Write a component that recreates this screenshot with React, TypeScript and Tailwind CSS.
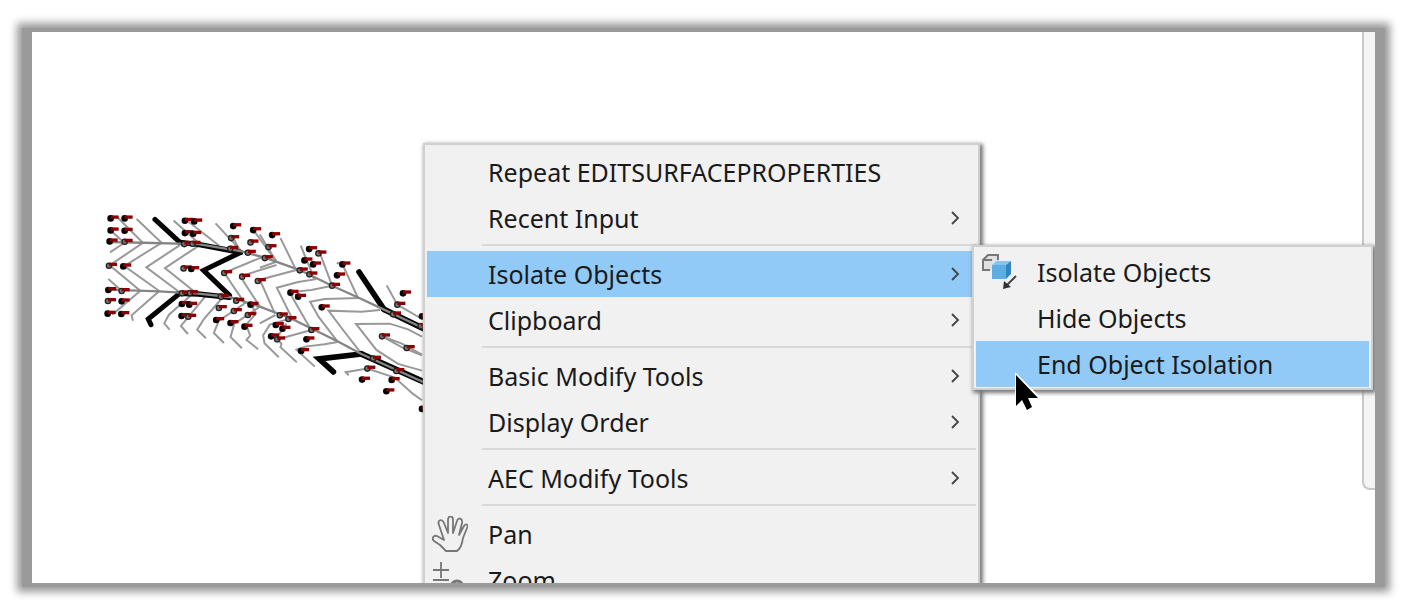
import type { ReactNode } from "react";
import { clsx } from "clsx";

type MenuEntry = {
  label: string;
  submenu?: boolean;
  active?: boolean;
  icon?: ReactNode;
};

// x, y of each survey point; hollow ones sit on a breakline
type Point = [number, number, boolean?];

const POINTS: Point[] = [
  [47, 55], [89, 55], [47, 91], [89, 92], [44, 124], [89, 125, true],
  [42, 197, true], [85, 199], [40, 270], [80, 273, true], [39, 303, true], [80, 304],
  [38, 341], [79, 342], [270, 62], [298, 64], [270, 99], [295, 101],
  [268, 132, true], [293, 131, true], [266, 205, true], [289, 207],
  [261, 280, true], [285, 279, true], [261, 312], [283, 314], [260, 348], [280, 350, true],
  [415, 78], [475, 90], [409, 114, true], [467, 127, true], [406, 146, true], [459, 158, true],
  [388, 219, true], [442, 230, true], [489, 243, true], [378, 290, true], [424, 302, true],
  [372, 324, true], [417, 333, true], [364, 360], [407, 369], [459, 345, true], [449, 380], [467, 314],
  [532, 105], [521, 141, true], [510, 174, true], [643, 147], [671, 160, true],
  [629, 181], [655, 193], [615, 211, true], [644, 223, true], [743, 193], [727, 226],
  [712, 257, true], [587, 278], [610, 290], [681, 322], [555, 346, true], [581, 357, true],
  [543, 375], [563, 386], [529, 409], [547, 418, true], [650, 390, true], [635, 418], [619, 453],
  [925, 280], [908, 314, true], [895, 343, true], [978, 378, true], [982, 349],
  [862, 409, true], [936, 444, true], [835, 476, true], [818, 506, true], [802, 539],
  [905, 513, true], [891, 540], [875, 574], [982, 627],
];

const CONTOURS = [
  "M68 52 L144 128 L44 196 L136 272 L52 344",
  "M45 90 L88 128 L45 157",
  "M125 57 L200 128 L88 198 L193 273 L110 346 L114 362",
  "M40 237 L80 272",
  "M236 61 L310 128 M255 130 M310 138 L210 204 L300 276",
  "M255 135 L154 202 L248 272",
  "M280 64 L373 137",
  "M362 70 L437 150",
  "M295 280 L222 344 L208 370 L224 389",
  "M332 288 L258 378 L279 402",
  "M382 294 L327 357 L307 389 L333 415",
  "M415 114 L435 151 M476 90 L545 185 M510 168 L388 218 L450 310 L372 362 L357 399 L387 429",
  "M545 195 L436 229 L495 320 L418 372 L407 411 L441 445",
  "M467 310 L484 340 L454 374 L466 407 L455 420 L490 448",
  "M495 103 L545 185 L495 203 M557 114 L604 210 L495 239 L540 340",
  "M618 137 L650 215 M676 161 L712 257",
  "M648 224 L660 238 L610 246 L546 263 L592 355",
  "M712 257 L650 270 L584 277 L647 386",
  "M726 188 L743 193 L790 294 L690 297 L646 305 L671 350 L728 424",
  "M856 330 L800 335 L701 332 L745 390 L800 461",
  "M982 410 L940 388 L885 371 L784 372 L845 450 L910 492 L982 512",
  "M876 256 L908 314 L982 357",
  "M982 464 L920 430 L862 409 L925 444 L982 466",
  "M542 345 L495 370 M575 359 L525 374 L505 406 L509 430 L552 472",
  "M575 371 L546 413 L560 432 L557 442 L606 487",
  "M650 390 L549 418 M728 426 L690 433 L631 440 L605 449 L660 500",
  "M762 526 L753 517 L818 506 L900 533 L955 582 L982 601",
];

function SurfacePlot() {
  return (
    <svg viewBox="0 0 985 660" className="absolute left-[63px] top-[168px] h-[220px] w-[328px]" aria-hidden="true">
      <g fill="none" stroke="#999" strokeWidth="6">
        {CONTOURS.map((d) => (
          <path key={d} d={d} />
        ))}
      </g>
      <g fill="none" stroke="#050505" strokeLinecap="round" strokeLinejoin="miter">
        <path strokeWidth="15" d="M180 58 L255 127 M437 157 L326 211 L404 286 M250 284 L160 357 L168 374" />
        <path strokeWidth="16" d="M255 127 L310 133 L437 157 M250 280 L310 282 L404 292" />
        <path strokeWidth="17" d="M793 216 L868 328 M800 462 L673 477 L716 516" />
        <path strokeWidth="18" d="M868 328 L985 385 M800 462 L985 545" />
      </g>
      <g fill="none" stroke="#858585" strokeWidth="7">
        <path d="M44 126 L144 128 L310 132 L437 153 L510 173 L615 210 L712 257 L800 297 L868 329 L985 384" />
        <path d="M40 269 L193 274 L310 281 L404 291 L495 320 L592 357 L728 424 L800 462 L985 546" />
      </g>
      {POINTS.map(([x, y, hollow]) => (
        <g key={`${x}-${y}`}>
          <circle
            cx={x}
            cy={y}
            r={hollow ? 8 : 10}
            fill={hollow ? "#777" : "#050505"}
            stroke={hollow ? "#222" : "none"}
            strokeWidth="4"
          />
          <path d={`M${x} ${y - 4} h24`} stroke="#8b0000" strokeWidth="10" />
        </g>
      ))}
    </svg>
  );
}

function HandIcon() {
  return (
    <svg viewBox="0 0 36 36" className="size-9" fill="none" stroke="#777" strokeWidth="1.8" strokeLinejoin="round" aria-hidden="true">
      <path d="M14 35 L8 29 L2 25 C-1 22 2 19 5 20 L12 24 L7 9 C5 4 10 2 12 7 L16 17 L16 4 C16 -1 21 -1 21 4 L21 17 L25 5 C26 1 31 2 30 7 L27 19 L32 10 C34 7 37 9 35 12 L31 22 C30 29 28 33 25 35 Z" />
    </svg>
  );
}

function ZoomIcon() {
  return (
    <svg viewBox="0 0 36 36" className="size-9" fill="none" stroke="#777" aria-hidden="true">
      <path strokeWidth="1.8" d="M9 0 V16 M1 8 H17 M1 18 H17" />
      <circle cx="25" cy="25" r="6" strokeWidth="3" />
      <path strokeWidth="3" d="M29 30 L34 35" />
    </svg>
  );
}

function IsolateIcon() {
  return (
    <svg viewBox="0 0 36 36" className="size-9" aria-hidden="true">
      <path d="M2 5 L7 1 H18 V7 H12 V16 H2 Z" fill="#e0e0e0" />
      <path d="M9 16 H2 V6 L7 1 H17 V6 M2 6 H11" fill="none" stroke="#777" strokeWidth="2" />
      <path d="M11 11 L15 7 H30 L25 11 Z" fill="#86c5ef" />
      <path d="M11 11 H25 V25 H11 Z" fill="#5faee3" />
      <path d="M25 11 L30 7 V20 L25 25 Z" fill="#3185c0" />
      <path d="M35 22 L26 31" stroke="#444" strokeWidth="2" />
      <path d="M22 35 L23 27 L30 33 Z" fill="#333" />
    </svg>
  );
}

function Cursor() {
  return (
    <svg viewBox="0 0 28 40" className="pointer-events-none absolute left-[982px] top-[340px] z-20 h-10 w-7" aria-hidden="true">
      <path d="M1 0 V37 L8 30 L12 39 L20 36 L16 26 H27 Z" fill="#fff" />
      <path d="M2 3 V34 L8 28 L13 38 L18 35 L14 26 H24 Z" fill="#000" />
    </svg>
  );
}

function MenuItem({ label, submenu, active, icon }: MenuEntry) {
  return (
    <button
      type="button"
      role="menuitem"
      aria-haspopup={submenu ? "menu" : undefined}
      className={clsx("flex h-[46px] w-full items-center text-left", active && "bg-[#91c9f7]")}
    >
      <span className="flex w-[61px] shrink-0 items-center pl-[5px]">{icon}</span>
      <span className="grow whitespace-nowrap">{label}</span>
      {submenu && (
        <svg viewBox="0 0 10 14" className="mr-4 h-3.5 w-2.5" fill="none" stroke="#444" strokeWidth="1.8" aria-hidden="true">
          <path d="M2 1 L8 7 L2 13" />
        </svg>
      )}
    </button>
  );
}

function Menu({ groups, className }: { groups: MenuEntry[][]; className: string }) {
  return (
    <div
      role="menu"
      className={clsx(
        "absolute border-2 border-[#d0d0d0] bg-[#f1f1f1] px-0.5 shadow-[2px_2px_4px_1px_#777]",
        className
      )}
    >
      {groups.map((group, i) => (
        <div key={group[0].label}>
          {i > 0 && <hr className="mb-[5px] ml-[55px] mt-[3px] border-t-2 border-[#d9d9d9]" />}
          {group.map((entry) => (
            <MenuItem key={entry.label} {...entry} />
          ))}
        </div>
      ))}
    </div>
  );
}

const MAIN_MENU: MenuEntry[][] = [
  [{ label: "Repeat EDITSURFACEPROPERTIES" }, { label: "Recent Input", submenu: true }],
  [
    { label: "Isolate Objects", submenu: true, active: true },
    { label: "Clipboard", submenu: true },
  ],
  [
    { label: "Basic Modify Tools", submenu: true },
    { label: "Display Order", submenu: true },
  ],
  [{ label: "AEC Modify Tools", submenu: true }],
  [
    { label: "Pan", icon: <HandIcon /> },
    { label: "Zoom", icon: <ZoomIcon /> },
  ],
];

const ISOLATE_MENU: MenuEntry[][] = [
  [
    { label: "Isolate Objects", icon: <IsolateIcon /> },
    { label: "Hide Objects" },
    { label: "End Object Isolation", active: true },
  ],
];

export default function App() {
  return (
    <main className="flex h-screen bg-white px-[22px] pb-[26px] pt-7 font-['Noto_Sans',sans-serif] text-[25px] leading-none text-[#1a1a1a]">
      <div className="flex grow bg-[#9a9a9a] px-2.5 py-1 shadow-[0_0_8px_5px_#9a9a9a]">
        <div className="relative flex grow items-start justify-end overflow-hidden bg-white">
          <SurfacePlot />
          <aside className="h-[458px] w-[13px] rounded-bl-lg border-b-2 border-l-2 border-[#c8c8c8] bg-[#f5f5f5]" />
          <Menu groups={MAIN_MENU} className="left-[391px] top-[111px] w-[557px] pt-1" />
          <Menu groups={ISOLATE_MENU} className="left-[940px] top-[213px] z-10 w-[401px] pb-px pt-0.5" />
          <Cursor />
        </div>
      </div>
    </main>
  );
}
